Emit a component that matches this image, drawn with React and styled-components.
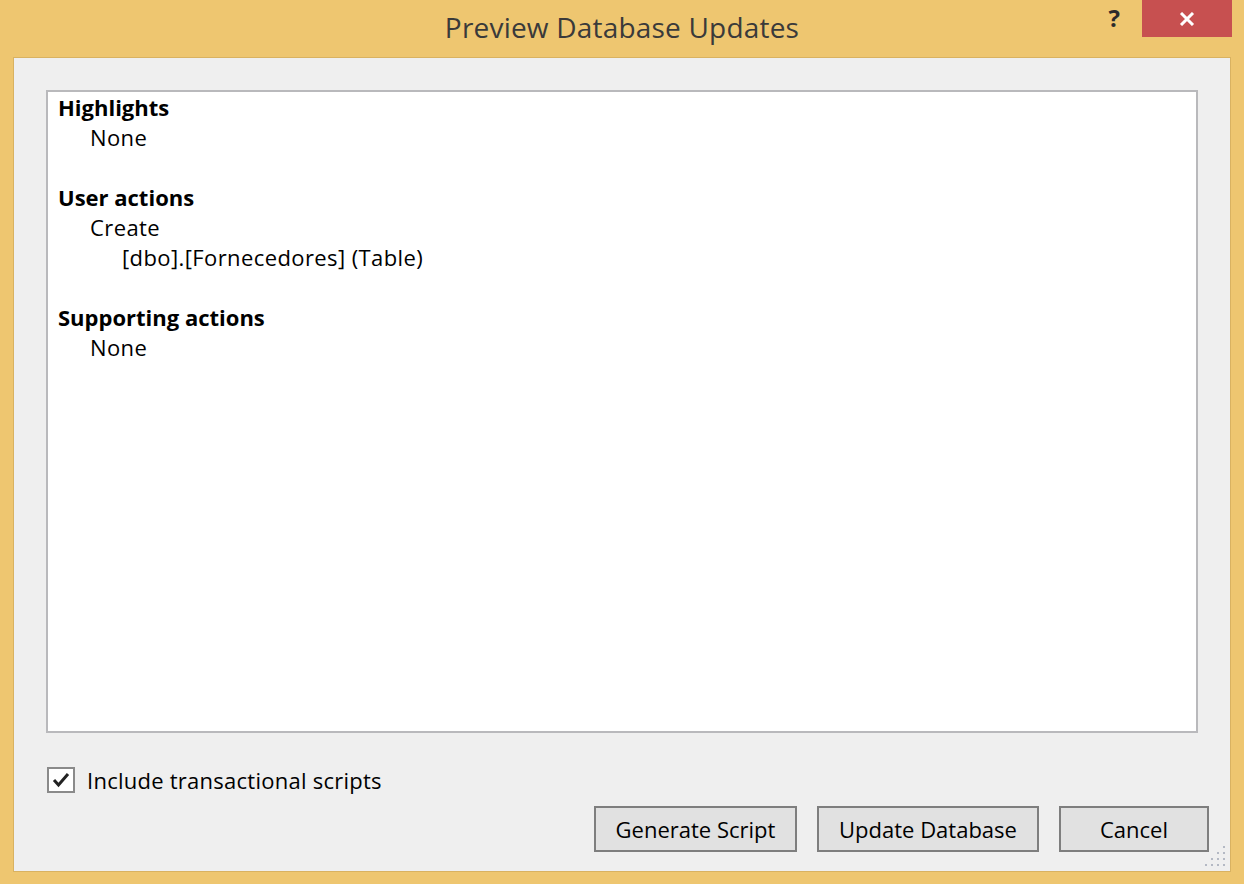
import styled, { createGlobalStyle } from "styled-components";

const GlobalStyle = createGlobalStyle`
    html, body {
        margin: 0;
        padding: 0;
        background: #eec670;
    }
    * {
        box-sizing: border-box;
    }
`;

const Window = styled.div`
    width: 1244px;
    height: 884px;
    background-color: #eec670;
    display: flex;
    flex-direction: column;
    font-family: "Open Sans", "Noto Sans", sans-serif;
    color: #000;
`;

const TitleBar = styled.div`
    height: 57px;
    position: relative;
    display: flex;
    align-items: center;
    justify-content: center;
    padding-bottom: 4px;
`;

const Title = styled.div`
    font-size: 28px;
    color: #3a3a3a;
    letter-spacing: 0.2px;
`;

const Help = styled.div`
    position: absolute;
    top: 1px;
    right: 124px;
    font-size: 24px;
    font-weight: 700;
    color: #2b2b2b;
`;

const CloseButton = styled.div`
    position: absolute;
    top: 0;
    right: 12px;
    width: 90px;
    height: 37px;
    background-color: #c75050;
    display: flex;
    align-items: center;
    justify-content: center;
`;

const Client = styled.div`
    flex: 1;
    margin: 0 13px 12px 13px;
    background-color: #efefef;
    border: 1px solid #d9b261;
    padding: 32px 32px 0 32px;
    display: flex;
    flex-direction: column;
    position: relative;
`;

const Panel = styled.div`
    height: 643px;
    background-color: #fff;
    border: 2px solid #b9b9bc;
    padding: 0 10px;
`;

const Line = styled.div`
    font-size: 22px;
    line-height: 30px;
    height: 30px;
    padding-left: ${props => props.$level * 32}px;
    font-weight: ${props => props.$bold ? 700 : 400};
    letter-spacing: ${props => props.$bold ? "0" : "0.4px"};
`;

const CheckRow = styled.label`
    display: flex;
    align-items: center;
    gap: 12px;
    margin-top: 32px;
    margin-left: 1px;
    font-size: 22px;
    letter-spacing: 0.25px;
`;

const CheckBox = styled.span`
    width: 28px;
    height: 26px;
    border: 2px solid #8a8a8a;
    background-color: #fff;
    display: flex;
    align-items: center;
    justify-content: center;
`;

const ButtonRow = styled.div`
    display: flex;
    justify-content: flex-end;
    gap: 20px;
    margin-top: 11px;
    margin-right: -11px;
`;

const Button = styled.button`
    width: ${props => props.$width}px;
    height: 46px;
    background-color: #e1e1e1;
    border: 2px solid #7e7e7e;
    font-family: "Open Sans", "Noto Sans", sans-serif;
    font-size: 22px;
    color: #000;
    padding: 0;
`;

const Grip = styled.svg`
    position: absolute;
    right: 3px;
    bottom: 3px;
`;

const lines = [
    { text: "Highlights", level: 0, bold: true },
    { text: "None", level: 1 },
    { text: "", level: 0 },
    { text: "User actions", level: 0, bold: true },
    { text: "Create", level: 1 },
    { text: "[dbo].[Fornecedores] (Table)", level: 2 },
    { text: "", level: 0 },
    { text: "Supporting actions", level: 0, bold: true },
    { text: "None", level: 1 },
];

// dots of the resize grip, a small staircase in the corner
const gripDots = [];
for (let row = 0; row < 4; row++) {
    for (let col = 3 - row; col < 4; col++) {
        gripDots.push([2 + col * 6, 2 + row * 6]);
    }
}

export default function App() {
    return (
    <>
    <GlobalStyle />
    <Window>
        <TitleBar>
            <Title>Preview Database Updates</Title>
            <Help>?</Help>
            <CloseButton>
                <svg width="16" height="14" viewBox="0 0 16 14">
                    <path d="M2 1 L14 13 M14 1 L2 13" stroke="#fff" strokeWidth="3" />
                </svg>
            </CloseButton>
        </TitleBar>
        <Client>
            <Panel>
                {lines.map((l, i) => (
                    <Line key={i} $level={l.level} $bold={l.bold}>{l.text}</Line>
                ))}
            </Panel>
            <CheckRow>
                <CheckBox>
                    <svg width="18" height="16" viewBox="0 0 18 16">
                        <path d="M2 8 L6.5 13 L16 2" fill="none" stroke="#222" strokeWidth="3" />
                    </svg>
                </CheckBox>
                Include transactional scripts
            </CheckRow>
            <ButtonRow>
                <Button $width={203}>Generate Script</Button>
                <Button $width={222}>Update Database</Button>
                <Button $width={150}>Cancel</Button>
            </ButtonRow>
            <Grip width="24" height="24" viewBox="0 0 24 24">
                {gripDots.map(([x, y], i) => (
                    <rect key={i} x={x} y={y} width="2" height="2" fill="#b4b9c4" />
                ))}
            </Grip>
        </Client>
    </Window>
    </>
    );
}
